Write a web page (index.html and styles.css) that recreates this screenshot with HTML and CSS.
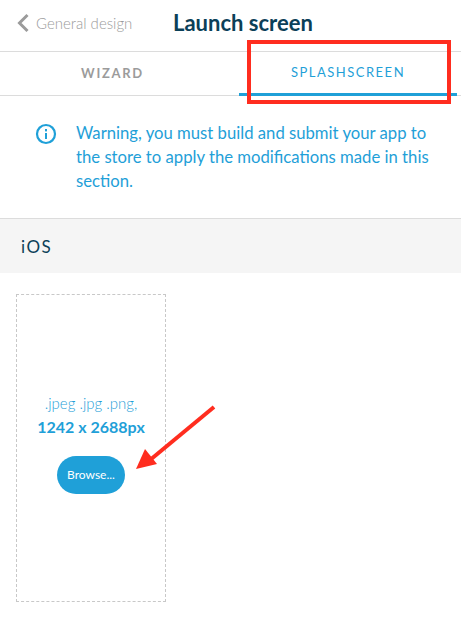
FILE: index.html
```html
<!DOCTYPE html>
<html>
    <head>
        <meta charset="utf-8">
        <link rel="stylesheet" href="styles.css">
    </head>
<body>
    <div class="header">
        <div class="back">
            <svg class="backIcon" width="14" height="20" viewBox="0 0 14 20"><path d="M11.5 2 L3.5 10 L11.5 18" fill="none" stroke="#9b9b9b" stroke-width="3"/></svg>
            <span>General design</span>
        </div>
        <div class="title">Launch screen</div>
    </div>
    <div class="tabs">
        <div class="tab">WIZARD</div>
        <div class="tab tabActive">SPLASHSCREEN</div>
    </div>
    <div class="warning">
        <svg class="infoIcon" width="22" height="22" viewBox="0 0 22 22">
            <circle cx="11" cy="11" r="9" fill="none" stroke="#1fa0d8" stroke-width="2.2"/>
            <rect x="10" y="10" width="2" height="6" fill="#1fa0d8"/>
            <rect x="10" y="6" width="2" height="2.4" fill="#1fa0d8"/>
        </svg>
        <p>Warning, you must build and submit your app to the store to apply the modifications made in this section.</p>
    </div>
    <div class="section">iOS</div>
    <div class="content">
        <div class="dropzone">
            <div class="formats">.jpeg .jpg .png,</div>
            <div class="size">1242 x 2688px</div>
            <div class="browse">Browse...</div>
        </div>
    </div>

    <div class="redBox"></div>
    <svg class="arrow" width="90" height="80" viewBox="0 0 90 80">
        <line x1="78" y1="3" x2="14" y2="56" stroke="#ff2d1f" stroke-width="4"/>
        <polygon points="0,65 9,45 21,60" fill="#ff2d1f"/>
    </svg>
</body>
</html>
```

FILE: styles.css
```css
body {
    margin: 0;
    width: 461px;
    height: 618px;
    overflow: hidden;
    position: relative;
    background: #fff;
    font-family: "Lato", "Liberation Sans", sans-serif;
}

.header {
    height: 45px;
    padding-bottom: 6px;
    display: flex;
    align-items: center;
    border-bottom: 1px solid #dcdcdc;
}

.back {
    display: flex;
    align-items: center;
    gap: 6px;
    width: 173px;
    padding-left: 16px;
    box-sizing: border-box;
    color: #9b9b9b;
    font-size: 15px;
    font-weight: 300;
}

.title {
    color: #0b4058;
    font-size: 22px;
    font-weight: 700;
}

.tabs {
    display: flex;
    height: 43px;
    border-bottom: 1px solid #dcdcdc;
}

.tab {
    flex: 1;
    display: flex;
    align-items: center;
    justify-content: center;
    padding-bottom: 2px;
    padding-left: 4px;
    box-sizing: border-box;
    color: #9b9b9b;
    font-size: 13px;
    font-weight: 700;
    letter-spacing: 1.7px;
}

.tabActive {
    flex: none;
    width: 218px;
    margin-right: 4px;
    margin-bottom: -1px;
    margin-left: 18px;
    padding-left: 0;
    color: #1fa0d8;
    font-weight: 400;
    letter-spacing: 1.5px;
    border-bottom: 3px solid #1fa0d8;
}

.warning {
    display: flex;
    align-items: flex-start;
    gap: 19px;
    height: 122px;
    padding: 25px 20px 0 35px;
    box-sizing: border-box;
    color: #1fa0d8;
}

.infoIcon {
    flex: none;
    margin-top: 2px;
}

.warning p {
    margin: 0;
    font-size: 16.7px;
    line-height: 24px;
}

.section {
    height: 54px;
    display: flex;
    align-items: center;
    padding-left: 21px;
    background: #f5f5f5;
    border-top: 1px solid #dcdcdc;
    color: #0b4058;
    font-size: 17px;
    letter-spacing: 1.5px;
}

.content {
    padding: 21px 16px 0;
}

.dropzone {
    width: 150px;
    height: 308px;
    box-sizing: border-box;
    padding-top: 98px;
    display: flex;
    flex-direction: column;
    align-items: center;
    border: 1px dashed #c8c8c8;
    color: #1fa0d8;
}

.formats {
    font-size: 15px;
    font-weight: 300;
    line-height: 20px;
}

.size {
    margin-top: 4px;
    font-size: 16px;
    font-weight: 700;
    line-height: 20px;
}

.browse {
    margin-top: 19px;
    width: 68px;
    height: 38px;
    display: flex;
    align-items: center;
    justify-content: center;
    border-radius: 19px;
    background: #1fa0d8;
    color: #fff;
    font-size: 12px;
    font-weight: 400;
    padding-bottom: 1px;
    box-sizing: border-box;
}

.redBox {
    position: absolute;
    left: 247px;
    top: 40px;
    width: 204px;
    height: 64px;
    box-sizing: border-box;
    border: 4px solid #ff2d1f;
}

.arrow {
    position: absolute;
    left: 136px;
    top: 404px;
}
```
